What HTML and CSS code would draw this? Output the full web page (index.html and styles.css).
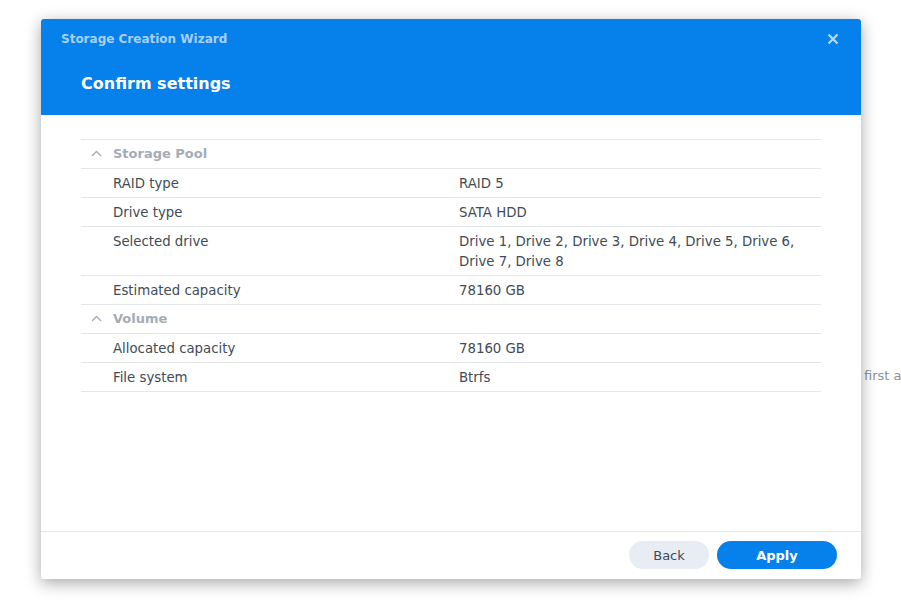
FILE: index.html
```html
<!DOCTYPE html>
<html>
<head>
<meta charset="utf-8">
<link rel="stylesheet" href="styles.css">
</head>
<body>
<div class="desktop">
  <div class="behind">first a</div>
  <div class="dialog">
    <div class="header">
      <div class="header-top">
        <span class="wizard-title">Storage Creation Wizard</span>
        <svg class="close" width="12" height="12" viewBox="0 0 12 12"><path d="M1.5 1.5 L10.5 10.5 M10.5 1.5 L1.5 10.5" stroke="#b9dafa" stroke-width="2.2" stroke-linecap="butt"/></svg>
      </div>
      <div class="step-title">Confirm settings</div>
    </div>
    <div class="body">
      <div class="table">
        <div class="section">
          <svg class="chev" width="11" height="7" viewBox="0 0 11 7"><path d="M1 6 L5.5 1.5 L10 6" fill="none" stroke="#a4acb5" stroke-width="1.4"/></svg>
          <span>Storage Pool</span>
        </div>
        <div class="row"><div class="label">RAID type</div><div class="value">RAID 5</div></div>
        <div class="row"><div class="label">Drive type</div><div class="value">SATA HDD</div></div>
        <div class="row"><div class="label">Selected drive</div><div class="value">Drive 1, Drive 2, Drive 3, Drive 4, Drive 5, Drive 6, Drive 7, Drive 8</div></div>
        <div class="row"><div class="label">Estimated capacity</div><div class="value">78160 GB</div></div>
        <div class="section">
          <svg class="chev" width="11" height="7" viewBox="0 0 11 7"><path d="M1 6 L5.5 1.5 L10 6" fill="none" stroke="#a4acb5" stroke-width="1.4"/></svg>
          <span>Volume</span>
        </div>
        <div class="row"><div class="label">Allocated capacity</div><div class="value">78160 GB</div></div>
        <div class="row"><div class="label">File system</div><div class="value">Btrfs</div></div>
      </div>
    </div>
    <div class="footer">
      <button class="btn back">Back</button>
      <button class="btn apply">Apply</button>
    </div>
  </div>
</div>
</body>
</html>
```
FILE: styles.css
```css
html, body {
  margin: 0;
  padding: 0;
  background: #ffffff;
  font-family: "DejaVu Sans", Verdana, sans-serif;
}
.desktop {
  position: relative;
  width: 901px;
  height: 616px;
  overflow: hidden;
}
.behind {
  position: absolute;
  left: 864px;
  top: 368px;
  font-size: 13px;
  color: #8a939c;
  white-space: nowrap;
}
.dialog {
  position: absolute;
  left: 41px;
  top: 19px;
  width: 820px;
  height: 560px;
  background: #ffffff;
  border-radius: 3px;
  box-shadow: 0 4px 16px rgba(0, 0, 0, 0.35);
  display: flex;
  flex-direction: column;
  overflow: hidden;
}
.header {
  background: #0680ea;
  height: 96px;
  box-sizing: border-box;
  padding: 12px 20px 0 20px;
}
.header-top {
  display: flex;
  justify-content: space-between;
  align-items: center;
  height: 16px;
}
.wizard-title {
  font-size: 12px;
  font-weight: bold;
  color: #a9d1f7;
}
.close {
  margin-right: 2px;
}
.step-title {
  margin-top: 27px;
  margin-left: 20px;
  font-size: 16px;
  font-weight: bold;
  color: #ffffff;
}
.body {
  flex: 1;
  padding: 24px 40px 0 40px;
}
.table {
  border-top: 1px solid #e3e7ec;
}
.section, .row {
  border-bottom: 1px solid #e3e7ec;
}
.section {
  height: 29px;
  box-sizing: border-box;
  padding-bottom: 2px;
  display: flex;
  align-items: center;
  font-size: 13px;
  font-weight: bold;
  color: #a4acb5;
}
.chev {
  margin-left: 10px;
  margin-right: 11px;
}
.row {
  display: flex;
  font-size: 13.3px;
  color: #414b55;
  line-height: 20px;
  padding: 5px 0 3px 0;
}
.label {
  width: 346px;
  padding-left: 32px;
  flex: none;
}
.value {
  flex: 1;
  padding-right: 20px;
}
.footer {
  height: 48px;
  box-sizing: border-box;
  border-top: 1px solid #e3e7ec;
  display: flex;
  justify-content: flex-end;
  align-items: flex-start;
  padding: 9px 24px 0 0;
  gap: 8px;
}
.btn {
  height: 28px;
  border: none;
  border-radius: 14px;
  font-family: "DejaVu Sans", Verdana, sans-serif;
  font-size: 13px;
  padding: 0;
}
.back {
  width: 80px;
  background: #e8edf4;
  color: #414b55;
}
.apply {
  width: 120px;
  background: #0680ea;
  color: #ffffff;
  font-weight: bold;
}
```
